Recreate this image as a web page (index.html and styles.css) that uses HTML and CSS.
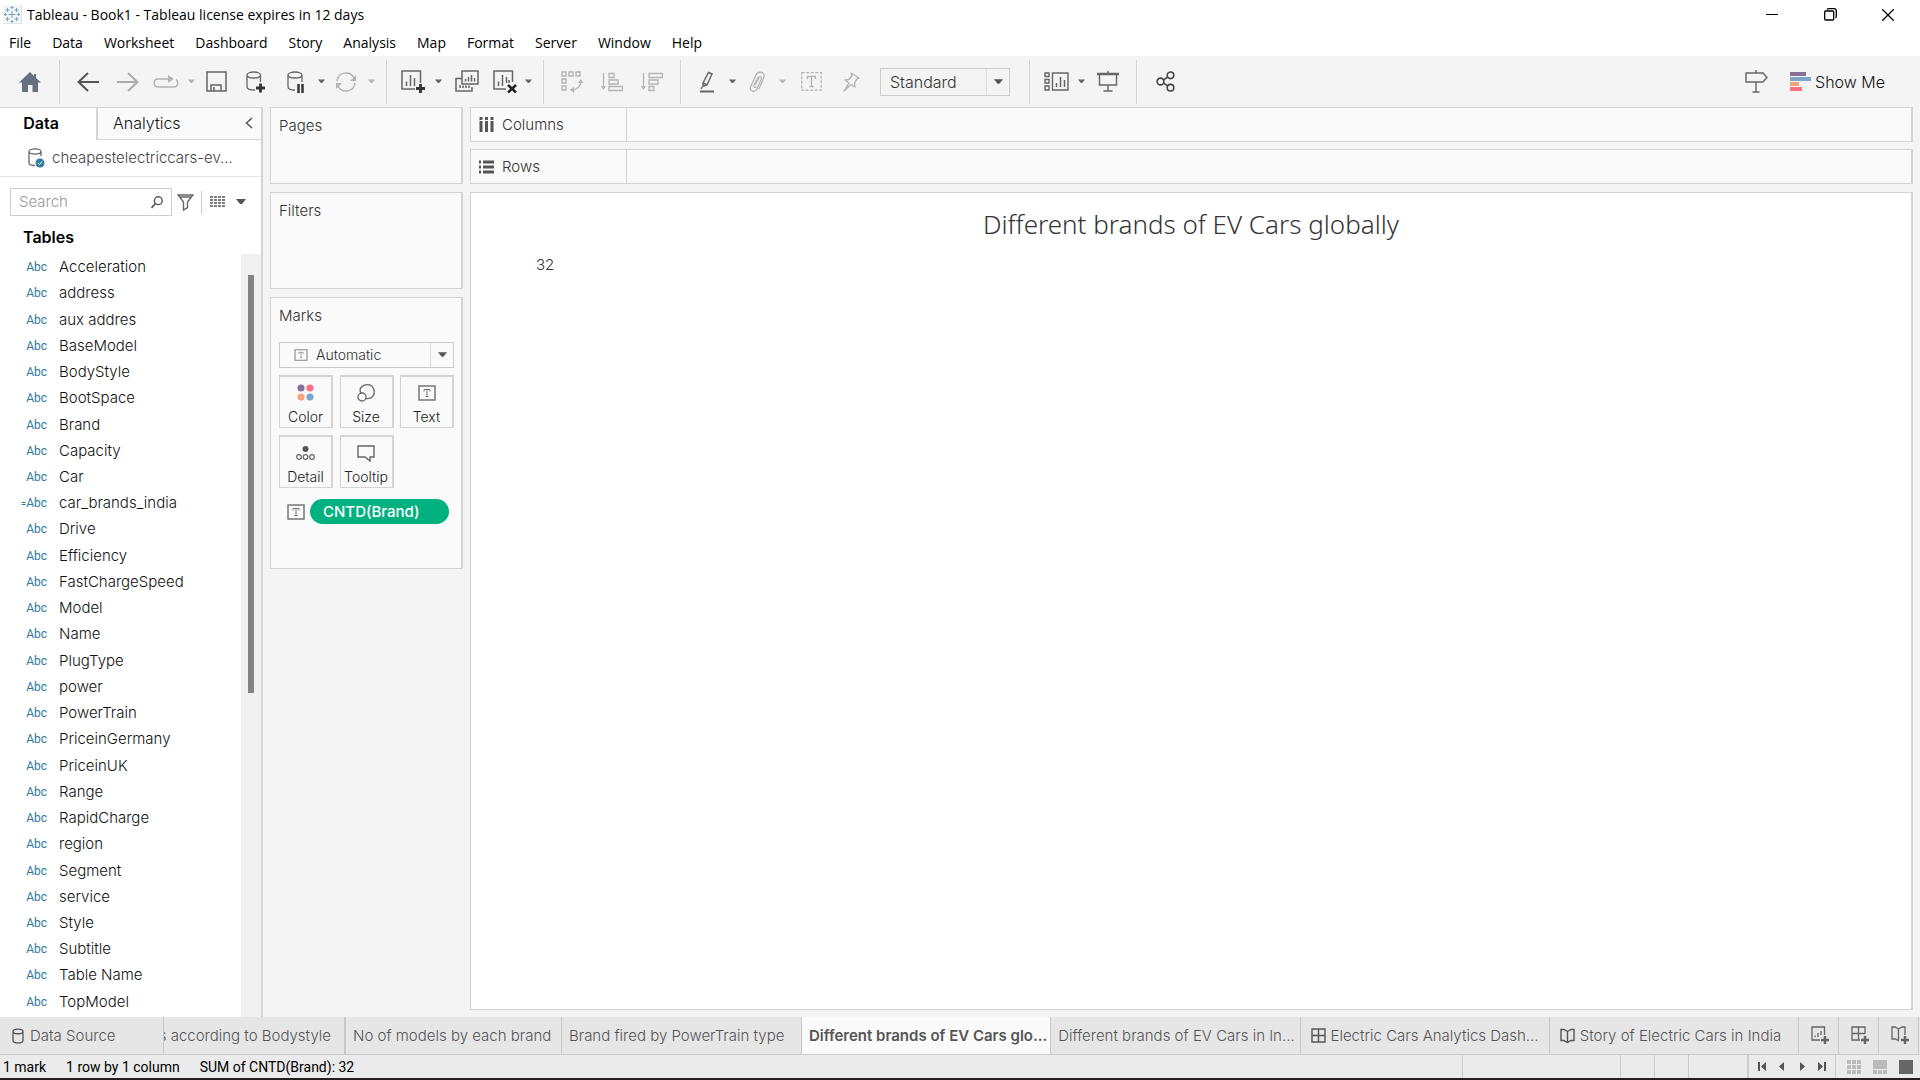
FILE: index.html
```html
<!DOCTYPE html>
<html lang="en">
<head>
<meta charset="utf-8">
<meta name="viewport" content="width=device-width, initial-scale=1">
<title>Tableau - Book1</title>
<link rel="stylesheet" href="styles.css">
</head>
<body>
<svg class="defs" aria-hidden="true">
  <symbol id="caret" viewBox="0 0 10 6"><path d="M0 0h10L6 5H4z" fill="currentColor"/></symbol>
  <symbol id="tbox" viewBox="0 0 18 16"><path d="M1 1h16v14H1z" fill="none" stroke="currentColor" stroke-width="1.5"/><path d="M6 6.500V4.500h6v2M9 4.500v7M7.500 11.500h3" fill="none" stroke="currentColor"/></symbol>
</svg>

<header class="titlebar">
  <svg class="logo" width="19" height="19" viewBox="0 0 19 19"><path d="M0 0h19v19H0z" fill="#e4e4e4"/><path d="M0 0h18v18H0z" fill="#f4f4f4"/><path d="M9 6v7M5.500 9.500h7M9 1v3M7.500 2.500h3M9 15v3M7.500 16.500h3M1 9.500h3M2.500 8v3M14 9.500h3M15.500 8v3M4.500 3v4M2.500 5h4M13.500 3v4M11.500 5h4M4.500 12v4M2.500 14h4M13.500 12v4M11.500 14h4" stroke="#6fa4cc" fill="none"/></svg>
  <span class="title">Tableau - Book1 - Tableau license expires in 12 days</span>
  <div class="winbtns">
    <button aria-label="Minimize"><svg width="12" height="12" viewBox="0 0 12 12"><path d="M0 5.500h12" stroke="#000"/></svg></button>
    <button aria-label="Restore"><svg width="13" height="13" viewBox="0 0 13 13"><rect x=".7" y="3" width="9" height="9" rx="1" fill="none" stroke="#000" stroke-width="1.300"/><path d="M3 1.500C3.500.7 4 .7 5 .7h5c1.500 0 2.300.8 2.300 2.300v5c0 1 0 1.500-.8 2" fill="none" stroke="#000" stroke-width="1.300"/></svg></button>
    <button aria-label="Close"><svg width="12" height="12" viewBox="0 0 12 12"><path d="M0 0l12 12M12 0L0 12" stroke="#000" stroke-width="1.300"/></svg></button>
  </div>
</header>

<nav class="menubar">
  <button>File</button><button>Data</button><button>Worksheet</button><button>Dashboard</button><button>Story</button><button>Analysis</button><button>Map</button><button>Format</button><button>Server</button><button>Window</button><button>Help</button>
</nav>

<div class="toolbar" role="toolbar">
  <button class="home" aria-label="Start page"><svg width="22" height="20" viewBox="0 0 22 20"><path d="M11 0l4 4V2h2v4l5 4.500h-3V20h-5.500v-7h-4.500v7H3v-9.500H0z" fill="#66707f"/></svg></button>
  <div class="group">
    <button class="b40" aria-label="Undo"><svg width="22" height="20" viewBox="0 0 22 20"><path d="M22 10H1.500M11 1L1.500 10l9.500 9" fill="none" stroke="#555" stroke-width="2"/></svg></button>
    <button class="b40 off" aria-label="Redo"><svg width="22" height="20" viewBox="0 0 22 20"><path d="M0 10h20.500M11 1l9.500 9-9.500 9" fill="none" stroke="#aaa" stroke-width="2"/></svg></button>
    <button class="b36 off" aria-label="Replay animation"><svg width="26" height="14" viewBox="0 0 26 14"><path d="M16 4H5c-5 0-5 8 0 8h16c4 0 5-5 2-7.500" fill="none" stroke="currentColor" stroke-width="1.500"/><path d="M15 0l6 4-6 4z" fill="currentColor"/></svg></button>
    <button class="car off" aria-label="Replay options"><svg width="7" height="5"><use href="#caret"/></svg></button>
    <button class="b36" aria-label="Save"><svg width="21" height="21" viewBox="0 0 21 21"><path d="M1 1h19v19H1zM5 20v-6h10v6M8 16v4" fill="none" stroke="currentColor" stroke-width="1.500"/></svg></button>
    <button class="b44" aria-label="New data source"><svg width="20" height="22" viewBox="0 0 20 22"><path d="M14.500 11V4C14.500 0 1 0 1 4v12c0 2 3 3 8 3M1 4c0 4 13.500 4 13.500 0" fill="none" stroke="currentColor" stroke-width="1.300"/><path d="M14.500 12.500v9M10 17h9" stroke="#333" stroke-width="2.800"/></svg></button>
    <button class="b36" aria-label="Pause updates"><svg width="18" height="22" viewBox="0 0 18 22"><path d="M15 11V4C15 0 1 0 1 4v12c0 2 3 3 7 3M1 4c0 4 14 4 14 0" fill="none" stroke="currentColor" stroke-width="1.300"/><path d="M11.500 13v9M15.500 13v9" stroke="#333" stroke-width="2.500"/></svg></button>
    <button class="car" aria-label="Pause options"><svg width="7" height="5"><use href="#caret"/></svg></button>
    <button class="b36 off" aria-label="Run update"><svg width="22" height="20" viewBox="0 0 22 20"><path d="M2 9C3 0 15-2 19 6M20 11C19 20 7 22 3 14" fill="none" stroke="currentColor" stroke-width="1.500"/><path d="M21 3v6h-6zM1 17v-6h6z" fill="currentColor"/></svg></button>
    <button class="car off" aria-label="Update options"><svg width="7" height="5"><use href="#caret"/></svg></button>
  </div>
  <div class="group">
    <button class="b36" aria-label="New worksheet"><svg width="24" height="23" viewBox="0 0 24 23"><path d="M14 19H1V1h18.500v12" fill="none" stroke="currentColor" stroke-width="1.500"/><path d="M5.500 11.500V16M9.500 5v11M13.500 8v8" stroke="currentColor" stroke-width="1.500" fill="none"/><path d="M19.500 14v9M15 18.500h9" stroke="#333" stroke-width="2.800"/></svg></button>
    <button class="car" aria-label="New worksheet options"><svg width="7" height="5"><use href="#caret"/></svg></button>
    <button class="b44" aria-label="Duplicate"><svg width="24" height="23" viewBox="0 0 24 23"><path d="M7 1h16v13H7zM7 8.500H1V21h16v-4M5 15v3M8 15.500v2.500M11 15.500v2.500M14 15.500v2.500M10.500 9v2.500M13.500 7v4.500M16.500 5v6.500M19.500 8v3.500" fill="none" stroke="currentColor" stroke-width="1.500"/></svg></button>
    <button class="b32" aria-label="Clear sheet"><svg width="24" height="23" viewBox="0 0 24 23"><path d="M13 19H1V1h18.500v11" fill="none" stroke="currentColor" stroke-width="1.500"/><path d="M5.500 11.500V16M9.500 5v11M13.500 7v6M16 10v3" stroke="currentColor" stroke-width="1.500" fill="none"/><path d="M15 15l8 7.500M23 15l-8 7.500" stroke="#222" stroke-width="2.500"/></svg></button>
    <button class="car" aria-label="Clear options"><svg width="7" height="5"><use href="#caret"/></svg></button>
  </div>
  <div class="group">
    <button class="b40 off" aria-label="Swap rows and columns"><svg width="22" height="22" viewBox="0 0 22 22"><path d="M1 1h4v4H1zM8 1h4v4H8zM15 1h4v4h-4zM1 8h4v4H1zM1 15h4v4H1zM11 19c5 0 9-4 9-9" fill="none" stroke="currentColor" stroke-width="1.400"/><path d="M17 12l3-4 2.500 4zM13 16l-4 3 4 3z" fill="currentColor"/></svg></button>
    <button class="b40 off" aria-label="Sort ascending"><svg width="22" height="20" viewBox="0 0 22 20"><path d="M2.500 1v15M8 1.500h5v4H8zM8 8h9v4H8zM8 14.500h13.500v4H8z" fill="none" stroke="currentColor" stroke-width="1.300"/><path d="M0 14h5l-2.500 4z" fill="currentColor"/></svg></button>
    <button class="b40 off" aria-label="Sort descending"><svg width="22" height="20" viewBox="0 0 22 20"><path d="M2.500 1v15M8 1.500h13.500v4H8zM8 8h9v4H8zM8 14.500h5v4H8z" fill="none" stroke="currentColor" stroke-width="1.300"/><path d="M0 14h5l-2.500 4z" fill="currentColor"/></svg></button>
  </div>
  <div class="group">
    <button class="b36" aria-label="Highlight"><svg width="16" height="22" viewBox="0 0 16 22"><path d="M4 12L9.500 1.500l3.500 1.500-5 11-4 1.500zM4 12l4 2M3 16l-1 2" fill="none" stroke="currentColor" stroke-width="1.500"/><path d="M1 20.500h14" stroke="currentColor" stroke-width="2"/></svg></button>
    <button class="car" aria-label="Highlight options"><svg width="7" height="5"><use href="#caret"/></svg></button>
    <button class="b36 off" aria-label="Group members"><svg width="17" height="22" viewBox="0 0 17 22"><path d="M6 14l4-7.500c1-1.500 3-.5 2.500 1L8 18c-2 4-8 2.500-6.500-2L7 4c2-4.500 9.500-3 8 2l-5 12M9.500 6L5 14.500c-.5 2 1.500 2.500 2.500 1" fill="none" stroke="currentColor" stroke-width="1.300"/></svg></button>
    <button class="car off" aria-label="Group options"><svg width="7" height="5"><use href="#caret"/></svg></button>
    <button class="b44 off" aria-label="Show mark labels"><svg width="21" height="19" viewBox="0 0 21 19"><path d="M.7.700h19.500v17.500H.7z" fill="none" stroke="currentColor" stroke-width="1.300" stroke-dasharray="3 1.500"/><path d="M6.500 7V4.500h8V7M10.500 4.500v10M8.500 14.500h4" fill="none" stroke="currentColor" stroke-width="1.300"/></svg></button>
    <button class="b36 off" aria-label="Fix axes"><svg width="17" height="20" viewBox="0 0 17 20"><path d="M8 1l8 5-2 .7-2.500 4.500.5 3.800-4-2.500L1 19l5-8-4-3 4-.5L9 3.500z" fill="none" stroke="currentColor" stroke-width="1.400" stroke-linejoin="round"/></svg></button>
    <div class="pick fit"><select aria-label="Fit"><option>Standard</option></select><span class="drop"><svg width="9" height="6"><use href="#caret"/></svg></span></div>
  </div>
  <div class="group">
    <button class="b36" aria-label="Show or hide cards"><svg width="25" height="19" viewBox="0 0 25 19"><path d="M8.500 1h15.500v17H8.500zM1 1h4v3.500H1zM1 7.500h4V11H1zM1 14h4v4H1z" fill="none" stroke="currentColor" stroke-width="1.400"/><path d="M12.500 11v4M16.500 5v10M20.500 8v7" stroke="currentColor" stroke-width="1.500"/></svg></button>
    <button class="car" aria-label="Card options"><svg width="7" height="5"><use href="#caret"/></svg></button>
    <button class="b40" aria-label="Presentation mode"><svg width="22" height="21" viewBox="0 0 22 21"><path d="M0 3h22" stroke="currentColor" stroke-width="2.500"/><path d="M11 0v2M2.500 3v11h17V3M11 14v6M6.500 20h9" fill="none" stroke="currentColor" stroke-width="1.400"/></svg></button>
  </div>
  <div class="group">
    <button class="b40" aria-label="Share"><svg width="19" height="21" viewBox="0 0 19 21"><g fill="none" stroke="#444" stroke-width="1.600"><circle cx="4.500" cy="10.500" r="3.400"/><circle cx="14.500" cy="4.300" r="3.300"/><circle cx="14.500" cy="16.700" r="3.300"/><path d="M7.500 8.800l4.200-2.700M7.500 12.200l4.200 2.700"/></g></svg></button>
  </div>
  <div class="right">
    <button class="sign" aria-label="Data guide"><svg width="23" height="23" viewBox="0 0 23 23"><path d="M1 3h17l4 4.500-4 4.500H1zM11 0v3M11 12v10M7.500 22h7" fill="none" stroke="currentColor" stroke-width="1.400"/></svg></button>
    <button class="showme"><svg width="21" height="19" viewBox="0 0 21 19"><path d="M0 0h16v4H0z" fill="#87709a"/><path d="M0 5h21v4H0z" fill="#7fa4ca"/><path d="M0 10h9v4H0z" fill="#f2a47d"/><path d="M0 15h12v4H0z" fill="#fb7184"/></svg>Show Me</button>
  </div>
</div>

<main class="workspace">
  <aside class="side">
    <div class="sidetabs"><button class="on">Data</button><button class="ana">Analytics<svg width="8" height="12" viewBox="0 0 8 12"><path d="M7 1L1.500 6 7 11" fill="none" stroke="#555" stroke-width="1.500"/></svg></button></div>
    <button class="source"><svg width="17" height="20" viewBox="0 0 17 20"><path d="M13 8V3.500c0-3.500-12-3.500-12 0V15c0 2 3 2.500 6 2.500M1 3.500c0 3.500 12 3.500 12 0" fill="none" stroke="#666" stroke-width="1.300"/><circle cx="12" cy="15" r="4.500" fill="#2f7da1"/><path d="M9.800 15l1.700 1.500 2.700-3" stroke="#fff" fill="none"/></svg>cheapestelectriccars-ev...</button>
    <div class="find">
      <div class="searchbox"><input type="text" placeholder="Search" aria-label="Search"><svg width="12" height="13" viewBox="0 0 12 13"><circle cx="7.300" cy="4.700" r="3.900" fill="none" stroke="#555" stroke-width="1.400"/><path d="M4.500 7.500L.5 12" stroke="#555" stroke-width="1.600"/></svg></div>
      <button aria-label="Filter fields"><svg width="17" height="17" viewBox="0 0 17 17"><path d="M1 1h15l-5.500 7v5.500L6.500 16V8zM3 3h11" fill="none" stroke="#666" stroke-width="1.400"/></svg></button>
      <button class="viewas" aria-label="View as"><svg width="16" height="12" viewBox="0 0 16 12"><path d="M0 1h16M0 4h16M0 7h16M0 10h16" stroke="#555" stroke-width="1.500" stroke-dasharray="3 1"/></svg></button>
      <button aria-label="View options"><svg width="10" height="6"><use href="#caret"/></svg></button>
    </div>
    <h2>Tables</h2>
    <div class="fields">
      <ul>
        <li><i>Abc</i>Acceleration</li><li><i>Abc</i>address</li><li><i>Abc</i>aux addres</li><li><i>Abc</i>BaseModel</li><li><i>Abc</i>BodyStyle</li><li><i>Abc</i>BootSpace</li><li><i>Abc</i>Brand</li><li><i>Abc</i>Capacity</li><li><i>Abc</i>Car</li><li><i><b>=</b>Abc</i>car_brands_india</li><li><i>Abc</i>Drive</li><li><i>Abc</i>Efficiency</li><li><i>Abc</i>FastChargeSpeed</li><li><i>Abc</i>Model</li><li><i>Abc</i>Name</li><li><i>Abc</i>PlugType</li><li><i>Abc</i>power</li><li><i>Abc</i>PowerTrain</li><li><i>Abc</i>PriceinGermany</li><li><i>Abc</i>PriceinUK</li><li><i>Abc</i>Range</li><li><i>Abc</i>RapidCharge</li><li><i>Abc</i>region</li><li><i>Abc</i>Segment</li><li><i>Abc</i>service</li><li><i>Abc</i>Style</li><li><i>Abc</i>Subtitle</li><li><i>Abc</i>Table Name</li><li><i>Abc</i>TopModel</li>
      </ul>
      <div class="scroll"><div class="thumb"></div></div>
    </div>
  </aside>

  <section class="cards">
    <div class="card pages">Pages</div>
    <div class="card filters">Filters</div>
    <div class="card marks">Marks
      <div class="pick type"><svg class="ticon" width="14" height="12"><use href="#tbox"/></svg><select aria-label="Mark type"><option>Automatic</option></select><span class="drop"><svg width="9" height="6"><use href="#caret"/></svg></span></div>
      <div class="markgrid">
        <button><svg width="18" height="18" viewBox="0 0 18 18"><circle cx="4" cy="4" r="3.600" fill="#87709a"/><circle cx="13" cy="4" r="3.600" fill="#fb7184"/><circle cx="4" cy="13" r="3.600" fill="#f2a47d"/><circle cx="13" cy="13" r="3.600" fill="#7fa4ca"/></svg>Color</button>
        <button><svg width="18" height="18" viewBox="0 0 18 18"><path d="M4 9C1 4 6 .7 10.500.7c9 0 9 14 0 14-1 0-1.500 0-2-.5" fill="none" stroke="#666" stroke-width="1.300"/><circle cx="5" cy="13" r="4" fill="none" stroke="#666" stroke-width="1.300"/></svg>Size</button>
        <button><svg width="18" height="18" viewBox="0 0 18 18"><use href="#tbox" width="18" height="18"/></svg>Text</button>
        <button><svg width="19" height="18" viewBox="0 0 19 18"><circle cx="9.500" cy="5" r="3" fill="#555"/><g fill="none" stroke="#666" stroke-width="1.200"><circle cx="3" cy="13" r="2.300"/><circle cx="9.500" cy="13" r="2.300"/><circle cx="16" cy="13" r="2.300"/></g></svg>Detail</button>
        <button><svg width="18" height="18" viewBox="0 0 18 18"><path d="M1 2h16v11h-4v4l-5-4H1z" fill="none" stroke="#666" stroke-width="1.400"/></svg>Tooltip</button>
      </div>
      <div class="pillrow"><svg width="18" height="16"><use href="#tbox"/></svg><button class="pill">CNTD(Brand)</button></div>
    </div>
  </section>

  <section class="sheet">
    <div class="shelves">
      <div class="shelf"><div class="name"><svg width="15" height="15" viewBox="0 0 15 15"><path d="M2 0v15M7.500 0v15M13 0v15" stroke="#555" stroke-width="3"/><path d="M0 3.500h15" stroke="#fafafa"/></svg>Columns</div></div>
      <div class="shelf"><div class="name"><svg width="15" height="14" viewBox="0 0 15 14"><path d="M0 2h15M0 7h15M0 12h15" stroke="#555" stroke-width="3"/><path d="M3 0v14" stroke="#fafafa" stroke-width="2"/></svg>Rows</div></div>
    </div>
    <div class="view"><h1>Different brands of EV Cars globally</h1><p>32</p></div>
  </section>
</main>

<nav class="tabs">
  <button class="ds"><svg width="12" height="16" viewBox="0 0 12 16"><path d="M1 3.500C1 .2 11 .2 11 3.500v9c0 3.300-10 3.300-10 0zM1 3.500c0 3 10 3 10 0" fill="none" stroke="currentColor" stroke-width="1.300"/></svg>Data Source</button>
  <button class="cut">s according to Bodystyle</button>
  <button class="mid">No of models by each brand</button>
  <button class="w240">Brand fired by PowerTrain type</button>
  <button class="w250 on">Different brands of EV Cars glo...</button>
  <button class="w250">Different brands of EV Cars in In...</button>
  <button class="w250 ico"><svg width="15" height="15" viewBox="0 0 15 15"><path d="M1 1h13v13H1zM7.500 1v13M1 7.500h13" fill="none" stroke="currentColor" stroke-width="1.400"/></svg>Electric Cars Analytics Dash...</button>
  <button class="w250 ico"><svg width="15" height="15" viewBox="0 0 15 15"><path d="M1 1.500h3l3.500 2 3.500-2h3v11h-3l-3.500 2-3.500-2H1zM7.500 3.500v11" fill="none" stroke="currentColor" stroke-width="1.400"/></svg>Story of Electric Cars in India</button>
  <button class="new" aria-label="New worksheet"><svg width="18" height="19" viewBox="0 0 18 19"><path d="M9 14H1V1h12.500v8M4 9.500V11M7 7v4M10 5v4" fill="none" stroke="currentColor" stroke-width="1.300"/><path d="M14 10v8M10 14h8" stroke="currentColor" stroke-width="2.500"/></svg></button>
  <button class="new" aria-label="New dashboard"><svg width="18" height="19" viewBox="0 0 18 19"><path d="M9 14H1V1h13v7M7.500 1v13M1 7.500h13" fill="none" stroke="currentColor" stroke-width="1.300"/><path d="M14 10v8M10 14h8" stroke="currentColor" stroke-width="2.500"/></svg></button>
  <button class="new" aria-label="New story"><svg width="18" height="19" viewBox="0 0 18 19"><path d="M8 15l-3.500-2H1V1h3l3.500 2L11 1h3v8M7.500 3v11" fill="none" stroke="currentColor" stroke-width="1.300"/><path d="M14 10v8M10 14h8" stroke="currentColor" stroke-width="2.500"/></svg></button>
</nav>

<footer class="status">
  <span>1 mark</span><span>1 row by 1 column</span><span>SUM of CNTD(Brand): 32</span>
  <div class="cells"><div class="c158"></div><div class="c34"></div><div class="c34"></div><div class="c58"></div></div>
  <div class="pager">
    <button aria-label="First sheet"><svg width="8" height="9" viewBox="0 0 8 9"><path d="M0 0h2v9H0zM8 0v9L3 4.500z" fill="#555"/></svg></button>
    <button aria-label="Previous sheet"><svg width="8" height="9" viewBox="0 0 8 9"><path d="M6 0v9L1 4.500z" fill="#555"/></svg></button>
    <button aria-label="Next sheet"><svg width="8" height="9" viewBox="0 0 8 9"><path d="M2 0v9l5-4.500z" fill="#555"/></svg></button>
    <button aria-label="Last sheet"><svg width="8" height="9" viewBox="0 0 8 9"><path d="M6 0h2v9H6zM0 0v9l5-4.500z" fill="#555"/></svg></button>
  </div>
  <div class="modes">
    <button aria-label="Sheet sorter"><svg width="14" height="14" viewBox="0 0 14 14"><path d="M0 2h14M0 7h14M0 12h14" stroke="#bbb" stroke-width="4" stroke-dasharray="4 1"/></svg></button>
    <button aria-label="Filmstrip"><svg width="14" height="14" viewBox="0 0 14 14"><path d="M0 0h14v9H0z" fill="#bbb"/><path d="M0 12h14" stroke="#bbb" stroke-width="4" stroke-dasharray="4 1"/></svg></button>
    <button aria-label="Tabs"><svg width="14" height="14"><path d="M0 0h14v14H0z" fill="#666"/></svg></button>
  </div>
</footer>
</body>
</html>
```
FILE: styles.css
```css
* { box-sizing: border-box; margin: 0; padding: 0; }
body {
  display: flex; flex-direction: column; min-height: 100vh;
  background: #f4f4f4; color: #333; font: 300 15px/20px Inter, sans-serif;
}
button, select, input { font: inherit; color: inherit; background: none; border: 0; }
svg { flex: none; display: block; }
.defs { width: 0; height: 0; position: absolute; }

.titlebar { display: flex; align-items: center; height: 29px; padding-left: 3px; background: #fff; color: #000; font: 400 14px/20px "Open Sans", sans-serif; }
.title { margin-left: 5px; }
.winbtns { display: flex; margin-left: auto; padding-right: 3px; }
.winbtns button { width: 58px; height: 28px; display: flex; align-items: center; justify-content: center; }
.menubar { display: flex; gap: 21px; height: 27px; padding: 0 9px; background: #fff; color: #000; font: 400 14px/27px "Open Sans", sans-serif; }

.toolbar { display: flex; align-items: center; height: 51px; color: #666; }
.toolbar button { display: flex; align-items: center; justify-content: center; height: 40px; }
.toolbar .home { width: 59px; }
.group { display: flex; align-items: center; height: 44px; padding: 0 8px; border-left: 1px solid #d4d4d4; }
.toolbar .b32 { width: 32px; }
.toolbar .b36 { width: 36px; }
.toolbar .b40 { width: 40px; }
.toolbar .b44 { width: 44px; }
.toolbar .car { width: 14px; }
.toolbar .off { color: #b4b4b4; }
.right { display: flex; align-items: center; margin-left: auto; padding-right: 35px; }
.toolbar .sign { width: 68px; }
.toolbar .showme { gap: 4px; color: #111; font-size: 16px; }

.pick { position: relative; display: flex; border: 1px solid #ccc; background: #fafafa; color: #333; }
.pick select { width: 100%; appearance: none; }
.drop { position: absolute; top: 0; right: 0; bottom: 0; width: 23px; display: flex; align-items: center; justify-content: center; border-left: 1px solid #ddd; color: #555; pointer-events: none; }
.fit { width: 130px; height: 28px; margin: 0 11px; background: #f4f4f4; font-size: 16px; }
.fit select { padding-left: 9px; }

.workspace { flex: 1; display: grid; grid-template-columns: 263px 193px minmax(0, 1fr); gap: 7px; padding: 0 7px 7px 0; }
.side { display: flex; flex-direction: column; margin-bottom: -7px; background: #fff; border-top: 1px solid #d4d4d4; border-right: 2px solid #d4d4d4; color: #111; }
.sidetabs { display: flex; height: 32px; font-size: 16px; }
.sidetabs button { padding-bottom: 2px; }
.sidetabs .on { width: 96px; padding-right: 14px; font-weight: 600; color: #000; }
.sidetabs .ana { flex: 1; display: flex; align-items: center; justify-content: space-between; padding: 0 8px 2px 15px; background: #fafafa; border: solid #d4d4d4; border-width: 0 0 1px 2px; }
.source { display: flex; align-items: center; gap: 7px; height: 37px; padding-left: 28px; border-bottom: 1px solid #e4e4e4; color: #444; }
.find { display: flex; align-items: center; height: 50px; padding-left: 10px; color: #555; }
.searchbox { display: flex; align-items: center; width: 162px; height: 28px; padding: 0 8px; border: 1px solid #ccc; margin-right: 5px; }
.searchbox input { flex: 1; min-width: 0; outline: 0; }
.searchbox input::placeholder { color: #999; opacity: 1; }
.find .viewas { height: 23px; margin: 0 10px 0 7px; padding-left: 8px; border-left: 1px solid #ccc; }
.side h2 { height: 27px; padding-left: 23px; font: 600 16px/20px Inter, sans-serif; color: #000; }
.fields { flex: 1; display: flex; }
.fields ul { flex: 1; display: flex; flex-direction: column; list-style: none; padding-bottom: 2px; }
.fields li { flex: 1; display: flex; align-items: center; }
.fields i { width: 59px; padding-right: 12px; text-align: right; font: 400 12px/20px Roboto, sans-serif; color: #2c7a9c; }
.fields b { font-weight: 500; font-size: 9px; }
.scroll { width: 20px; padding: 21px 0 0 7px; background: #f0f0f0; }
.thumb { width: 6px; height: 418px; background: #838383; }

.cards { display: flex; flex-direction: column; gap: 8px; }
.card { padding: 8px 7px 8px 8px; background: #fafafa; border: 1px solid #d4d4d4; border-right-width: 2px; }
.pages { height: 77px; }
.filters { height: 97px; }
.marks { min-height: 272px; }
.type { height: 26px; margin-top: 16px; align-items: center; font-size: 14px; }
.type select { padding-left: 8px; }
.ticon { margin-left: 14px; color: #888; }
.markgrid { display: grid; grid-template-columns: repeat(3, 54px); justify-content: space-between; gap: 7px 0; margin-top: 7px; }
.markgrid button { display: flex; flex-direction: column; align-items: center; gap: 6px; height: 53px; padding-top: 7px; border: 1px solid #d4d4d4; border-width: 2px 2px 1px 1px; font-size: 14px; line-height: 18px; color: #222; }
.markgrid svg { color: #777; }
.pillrow { display: flex; align-items: center; gap: 5px; margin-top: 11px; padding-left: 8px; color: #777; }
.pill { width: 139px; height: 25px; padding-left: 13px; border-radius: 13px; background: #00b180; color: #fff; font-weight: 500; text-align: left; }

.sheet { display: flex; flex-direction: column; gap: 8px; }
.shelves { display: flex; flex-direction: column; gap: 7px; }
.shelf { height: 35px; background: #fafafa; border: 1px solid #d4d4d4; border-right-width: 2px; display: flex; }
.name { width: 156px; display: flex; align-items: center; gap: 8px; padding-left: 8px; border-right: 1px solid #d4d4d4; }
.view { flex: 1; padding: 14px 0 0; background: #fff; border: 1px solid #d4d4d4; border-right-width: 2px; }
.view h1 { font: 300 26px/34px "Noto Sans", sans-serif; text-align: center; }
.view p { padding: 14px 0 0 65px; }

.tabs { display: flex; height: 38px; padding-right: 1px; background: #e6e6e6; border-bottom: 1px solid #ccc; color: #555; }
.tabs button { flex: none; display: flex; align-items: center; overflow: hidden; white-space: nowrap; padding-left: 7px; border-right: 1px solid #c8c8c8; }
.tabs .ds { width: 164px; padding-left: 12px; gap: 6px; }
.tabs .cut { width: 182px; justify-content: flex-end; padding: 0 13px 0 0; border-right-width: 2px; }
.tabs .mid { width: 216px; }
.tabs .w240 { width: 240px; }
.tabs .w250 { flex: 1 1 250px; }
.tabs .ico { gap: 5px; padding-left: 10px; }
.tabs .on { background: #fafafa; font-weight: 600; }
.tabs .new { width: 40px; padding-left: 12px; color: #666; }

.status { display: flex; align-items: center; height: 25px; background: #ebebeb; border-bottom: 2px solid #231f20; color: #000; font: 400 14px/20px Roboto, sans-serif; padding-left: 3px; gap: 20px; }
.cells, .pager, .modes { display: flex; align-self: stretch; align-items: center; }
.cells { margin: 0 -20px 0 auto; align-items: stretch; }
.cells div { border-left: 1px solid #ccc; }
.c158 { width: 158px; }
.c34 { width: 34px; }
.c58 { width: 59px; }
.pager { width: 88px; padding-left: 3px; border-left: 2px solid #ccc; margin-right: -20px; }
.pager button { width: 20px; display: flex; justify-content: center; }
.modes { width: 85px; gap: 12px; padding-left: 11px; border-left: 1px solid #ccc; }
```
